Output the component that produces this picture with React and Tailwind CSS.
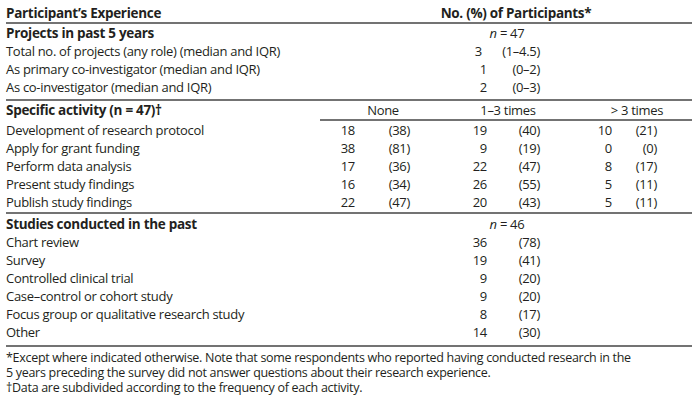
const font = { fontFamily: '"Open Sans", "Liberation Sans", sans-serif' };

const projects = [
  ["Total no. of projects (any role) (median and IQR)", "3", "(1–4.5)"],
  ["As primary co-investigator (median and IQR)", "1", "(0–2)"],
  ["As co-investigator (median and IQR)", "2", "(0–3)"],
];

const activities = [
  ["Development of research protocol", "18", "(38)", "19", "(40)", "10", "(21)"],
  ["Apply for grant funding", "38", "(81)", "9", "(19)", "0", "(0)"],
  ["Perform data analysis", "17", "(36)", "22", "(47)", "8", "(17)"],
  ["Present study findings", "16", "(34)", "26", "(55)", "5", "(11)"],
  ["Publish study findings", "22", "(47)", "20", "(43)", "5", "(11)"],
];

const studies = [
  ["Chart review", "36", "(78)"],
  ["Survey", "19", "(41)"],
  ["Controlled clinical trial", "9", "(20)"],
  ["Case–control or cohort study", "9", "(20)"],
  ["Focus group or qualitative research study", "8", "(17)"],
  ["Other", "14", "(30)"],
];

function Rule({ className = "" }) {
  return <div className={"h-[2px] bg-[#737373] " + className} />;
}

function Label({ children, bold }) {
  return (
    <div className={"w-[314px] shrink-0 whitespace-nowrap " + (bold ? "font-bold text-[13.5px]" : "")}>
      {children}
    </div>
  );
}

function SingleRow({ label, num, pct, numPad = "" }) {
  return (
    <div className="flex h-[18px] items-center">
      <Label>{label}</Label>
      <div className="w-[90px] shrink-0" />
      <div className={"w-[77px] shrink-0 text-right " + numPad}>{num}</div>
      <div className="w-[53px] shrink-0 text-right">{pct}</div>
    </div>
  );
}

function SectionHead({ label, n }) {
  return (
    <div className="flex h-[18px] items-center">
      <Label bold>{label}</Label>
      {n && (
        <div className="w-[374px] shrink-0 text-center">
          <span className="italic">n</span> = {n}
        </div>
      )}
    </div>
  );
}

export default function App() {
  return (
    <div
      className="w-[700px] h-[405px] bg-white text-[#231f20] text-[13px] leading-[18px] tracking-[-0.3px] pl-[6px] pr-[8px] pt-[3px]"
      style={font}
    >
      {/* header */}
      <div className="flex h-[19px] items-center font-bold">
        <Label bold>Participant’s Experience</Label>
        <div className="w-[372px] shrink-0 pl-[20px] text-center text-[13.5px]">No. (%) of Participants*</div>
      </div>
      <Rule />

      <SectionHead label="Projects in past 5 years" n="47" />
      {projects.map((r, i) => (
        <SingleRow key={r[0]} label={r[0]} num={r[1]} pct={r[2]} numPad={i === 0 ? "pr-[5px]" : ""} />
      ))}

      <Rule className="mt-[3px]" />
      <div className="flex h-[18px] items-center">
        <Label bold>Specific activity (n = 47)†</Label>
        <div className="w-[126px] shrink-0 text-center">None</div>
        <div className="w-[124px] shrink-0 text-center">1–3 times</div>
        <div className="w-[122px] shrink-0 pl-[12px] text-center">&gt; 3 times</div>
      </div>
      <div className="flex">
        <div className="w-[314px] shrink-0" />
        <Rule className="flex-1" />
      </div>
      {activities.map((r) => (
        <div key={r[0]} className="flex h-[18px] items-center">
          <Label>{r[0]}</Label>
          <div className="w-[35px] shrink-0 text-right">{r[1]}</div>
          <div className="w-[55px] shrink-0 text-right">{r[2]}</div>
          <div className="w-[77px] shrink-0 text-right">{r[3]}</div>
          <div className="w-[53px] shrink-0 text-right">{r[4]}</div>
          <div className="w-[72px] shrink-0 text-right">{r[5]}</div>
          <div className="w-[45px] shrink-0 text-right">{r[6]}</div>
        </div>
      ))}

      <Rule className="mt-[1px]" />
      <div className="mt-[1px]">
        <SectionHead label="Studies conducted in the past" n="46" />
      </div>
      {studies.map((r) => (
        <SingleRow key={r[0]} label={r[0]} num={r[1]} pct={r[2]} />
      ))}

      <Rule className="mt-[4px]" />
      <div className="mt-[3px] text-[12.5px] leading-[15px] whitespace-nowrap">
        <p>*Except where indicated otherwise. Note that some respondents who reported having conducted research in the</p>
        <p>5 years preceding the survey did not answer questions about their research experience.</p>
        <p>†Data are subdivided according to the frequency of each activity.</p>
      </div>
    </div>
  );
}
